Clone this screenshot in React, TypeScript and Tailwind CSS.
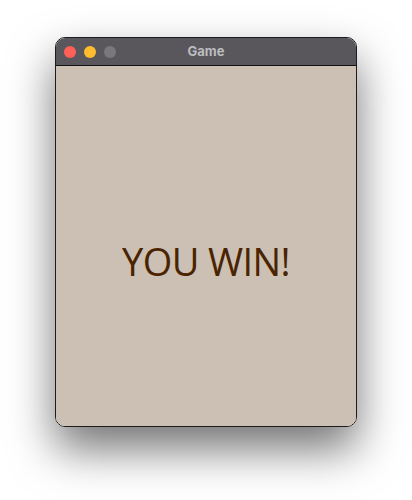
const App = () => {
  return (
    <div className="w-[412px] h-[500px] bg-white flex justify-center pt-[37px]">
      <div className="w-[302px] h-[390px] flex flex-col rounded-[10px] border border-[#1c1c1c] overflow-hidden shadow-[0_22px_45px_rgba(0,0,0,0.55)]">
        <div className="relative h-[28px] bg-[#59575c] border-b border-[#111] flex items-center px-[8px] gap-[8px] shrink-0">
          <span className="w-[12px] h-[12px] rounded-full bg-[#fe5f57]" />
          <span className="w-[12px] h-[12px] rounded-full bg-[#febc2e]" />
          <span className="w-[12px] h-[12px] rounded-full bg-[#79787d]" />
          <span
            className="absolute inset-x-0 top-0 h-full flex items-center justify-center text-[13px] font-bold text-[#bdbcc0]"
            style={{ fontFamily: "Inter, 'Liberation Sans', sans-serif" }}
          >
            Game
          </span>
        </div>
        <div className="flex-1 bg-[#cbc0b3] flex items-center justify-center">
          <span
            className="text-[38px] font-medium tracking-[-0.6px] text-[#4a2300] leading-none mt-[30px]"
            style={{ fontFamily: "'Open Sans', sans-serif" }}
          >
            YOU WIN!
          </span>
        </div>
      </div>
    </div>
  );
};

export default App;
